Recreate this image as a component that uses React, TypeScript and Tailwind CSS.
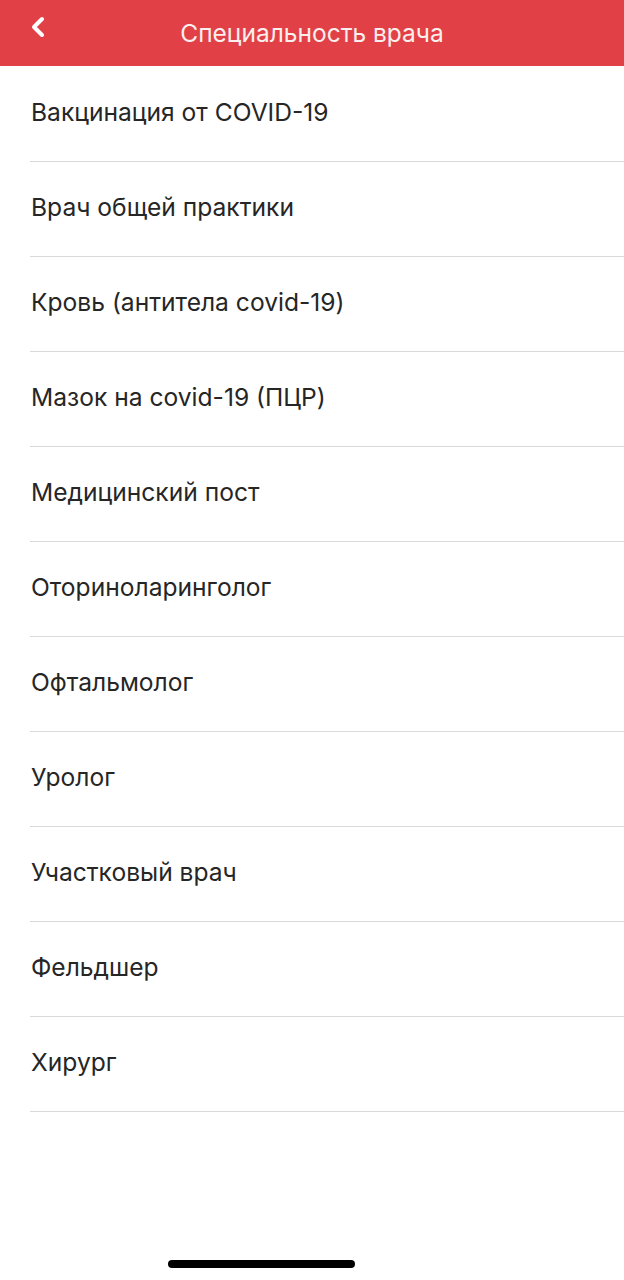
import { ChevronLeft } from "lucide-react";

const specialties = [
    "Вакцинация от COVID-19",
    "Врач общей практики",
    "Кровь (антитела covid-19)",
    "Мазок на covid-19 (ПЦР)",
    "Медицинский пост",
    "Оториноларинголог",
    "Офтальмолог",
    "Уролог",
    "Участковый врач",
    "Фельдшер",
    "Хирург",
];

const App = () => {
    return (
        <div className="flex min-h-[1280px] w-full flex-col bg-white font-['Inter',sans-serif]">
            <header className="relative flex h-[66px] items-center justify-center bg-[#e14146]">
                <button type="button" className="absolute top-[11px] left-[22px] text-white">
                    <ChevronLeft size={32} strokeWidth={3} />
                </button>
                <h1 className="text-[24.5px] text-[#fbeeee]">Специальность врача</h1>
            </header>

            <ul className="flex flex-col pt-[1px] pl-[30px]">
                {specialties.map((item) => (
                    <li
                        key={item}
                        className="flex h-[95px] items-center border-b border-[#d9d9d9] pb-[3px] pl-[1px] text-[24.6px] text-[#262626]"
                    >
                        {item}
                    </li>
                ))}
            </ul>

            <div className="mt-auto flex pb-[12px] pl-[168px]">
                <div className="h-[8px] w-[187px] rounded-full bg-black" />
            </div>
        </div>
    );
};

export default App;
